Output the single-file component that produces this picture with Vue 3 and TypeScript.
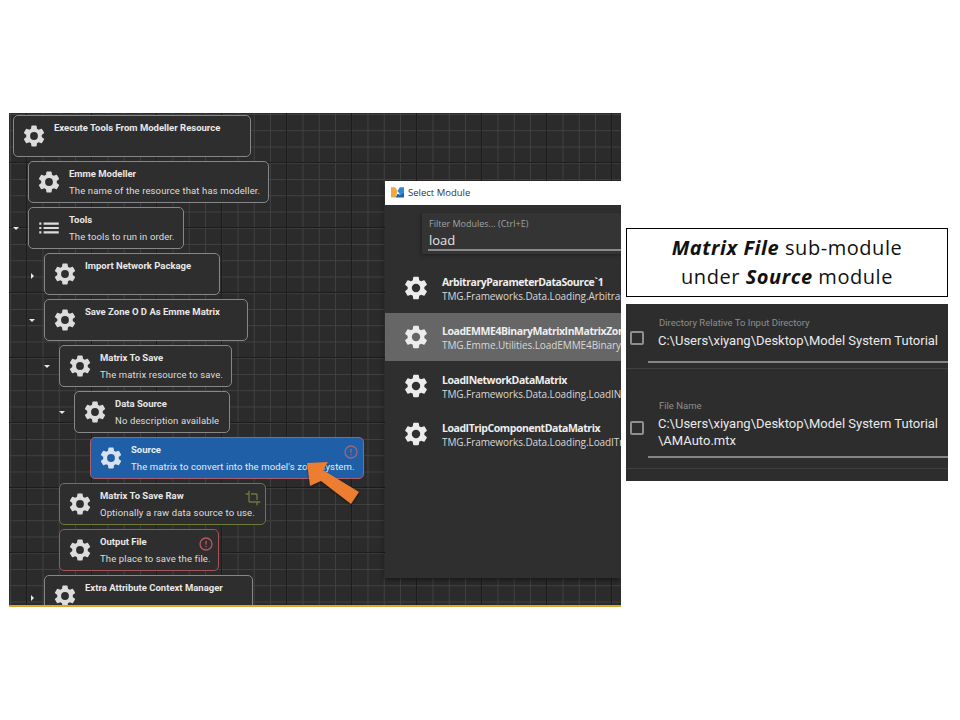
<script setup lang="ts">
interface TreeNode { title: string; desc?: string; left: number; width: number; kind?: string; icon?: string; caret?: string; mark?: string }
const nodes: TreeNode[] = [
  { title: 'Execute Tools From Modeller Resource', left: 4, width: 238 },
  { title: 'Emme Modeller', desc: 'The name of the resource that has modeller.', left: 19, width: 241 },
  { title: 'Tools', desc: 'The tools to run in order.', left: 19, width: 156, icon: 'list', caret: 'down' },
  { title: 'Import Network Package', left: 35, width: 176, caret: 'right' },
  { title: 'Save Zone O D As Emme Matrix', left: 35, width: 204, caret: 'down' },
  { title: 'Matrix To Save', desc: 'The matrix resource to save.', left: 50, width: 173, caret: 'down' },
  { title: 'Data Source', desc: 'No description available', left: 65, width: 156, caret: 'down' },
  { title: 'Source', desc: "The matrix to convert into the model's zone system.", left: 81, width: 274, kind: 'selected', mark: 'alert' },
  { title: 'Matrix To Save Raw', desc: 'Optionally a raw data source to use.', left: 50, width: 207, kind: 'optional', mark: 'crop' },
  { title: 'Output File', desc: 'The place to save the file.', left: 50, width: 160, kind: 'error', mark: 'alert' },
  { title: 'Extra Attribute Context Manager', left: 35, width: 209, caret: 'right' },
]
const modules = [
  { name: 'ArbitraryParameterDataSource`1', path: 'TMG.Frameworks.Data.Loading.ArbitraryParameter' },
  { name: 'LoadEMME4BinaryMatrixInMatrixZoneSystem', path: 'TMG.Emme.Utilities.LoadEMME4BinaryMatrix', active: true },
  { name: 'LoadINetworkDataMatrix', path: 'TMG.Frameworks.Data.Loading.LoadINetworkData' },
  { name: 'LoadITripComponentDataMatrix', path: 'TMG.Frameworks.Data.Loading.LoadITripComp' },
]
const gear = 'M19.14 12.94c.04-.3.06-.61.06-.94s-.02-.64-.07-.94l2.03-1.58a.49.49 0 0 0 .12-.61l-1.92-3.32a.49.49 0 0 0-.59-.22l-2.39.96a7 7 0 0 0-1.62-.94l-.36-2.54a.48.48 0 0 0-.48-.41h-3.84a.48.48 0 0 0-.47.41l-.36 2.54c-.59.24-1.13.57-1.62.94l-2.39-.96a.48.48 0 0 0-.59.22L2.74 8.87a.48.48 0 0 0 .12.61l2.03 1.58c-.05.3-.09.63-.09.94s.02.64.07.94l-2.03 1.58a.49.49 0 0 0-.12.61l1.92 3.32c.12.22.37.29.59.22l2.39-.96c.5.38 1.03.7 1.62.94l.36 2.54c.05.24.24.41.48.41h3.84c.24 0 .44-.17.47-.41l.36-2.54c.59-.24 1.13-.56 1.62-.94l2.39.96c.22.08.47 0 .59-.22l1.92-3.32a.48.48 0 0 0-.12-.61zM12 15.6a3.6 3.6 0 1 1 0-7.2 3.6 3.6 0 0 1 0 7.2z'
</script>

<template>
  <main class="page">
    <section class="canvas">
      <div class="tree">
        <div v-for="n in nodes" :key="n.title" class="row" :style="{ marginLeft: n.left + 'px', width: n.width + 'px' }">
          <span v-if="n.caret" class="caret" :class="n.caret"></span>
          <article class="node" :class="n.kind">
            <svg v-if="n.icon === 'list'" class="nicon" viewBox="0 0 24 24"><path d="M3 13h2v-2H3zm0 4h2v-2H3zm0-8h2V7H3zm4 4h14v-2H7zm0 4h14v-2H7zM7 7v2h14V7z" /></svg>
            <svg v-else class="nicon" viewBox="0 0 24 24"><path :d="gear" /></svg>
            <div class="ntext">
              <div class="ntitle">{{ n.title }}</div>
              <div v-if="n.desc" class="ndesc">{{ n.desc }}</div>
            </div>
            <svg v-if="n.mark === 'alert'" class="mark alert" viewBox="0 0 24 24"><path d="M11 15h2v2h-2zm0-8h2v6h-2zm1-5a10 10 0 1 0 0 20 10 10 0 0 0 0-20zm0 18a8 8 0 1 1 0-16 8 8 0 0 1 0 16z" /></svg>
            <svg v-if="n.mark === 'crop'" class="mark crop" viewBox="0 0 24 24"><path d="M17 15h2V7a2 2 0 0 0-2-2H9v2h8zM7 17V1H5v4H1v2h4v10a2 2 0 0 0 2 2h10v4h2v-4h4v-2z" /></svg>
          </article>
        </div>
      </div>

      <svg class="arrow" viewBox="0 0 56 46">
        <path d="M2 3 L23 2 L18 10 L54 32 L46 44 L16 21 L5 26 Z" />
      </svg>

      <section class="dialog">
        <header class="dtitle">
          <svg class="logo" viewBox="0 0 14 12">
            <path d="M0 1h4.5l2.5 4-2 7H0z" fill="#f2a93b" />
            <path d="M7 5l2.5-4H14v5l-4 3z" fill="#2d86d6" />
            <path d="M5 12l2-4 3 1 4-3v6z" fill="#1c62ad" />
          </svg>
          <span>Select Module</span>
        </header>
        <div class="filter">
          <div class="flabel">Filter Modules... (Ctrl+E)</div>
          <div class="fvalue">load</div>
        </div>
        <ul class="mlist">
          <li v-for="m in modules" :key="m.name" class="mitem" :class="{ active: m.active }">
            <svg class="micon" viewBox="0 0 24 24"><path :d="gear" /></svg>
            <div class="mtext">
              <div class="mname">{{ m.name }}</div>
              <div class="mpath">{{ m.path }}</div>
            </div>
          </li>
        </ul>
      </section>
    </section>

    <aside class="side">
      <div class="caption"><b>Matrix File</b> sub-module<br />under <b>Source</b> module</div>
      <div class="props">
        <div class="prop first">
          <span class="check"></span>
          <div class="field">
            <div class="plabel">Directory Relative To Input Directory</div>
            <div class="pvalue">C:\Users\xiyang\Desktop\Model System Tutorial</div>
          </div>
        </div>
        <div class="prop second">
          <span class="check"></span>
          <div class="field">
            <div class="plabel">File Name</div>
            <div class="pvalue">C:\Users\xiyang\Desktop\Model System Tutorial</div>
            <div class="pvalue next">\AMAuto.mtx</div>
          </div>
        </div>
      </div>
    </aside>
  </main>
</template>

<style>
html, body { margin: 0; background: #fff; }
</style>

<style scoped>
.page { width: 960px; height: 720px; display: flex; align-items: flex-start; padding: 113px 0 0 9px; box-sizing: border-box; background: #fff; overflow: hidden; font-family: Roboto, "Liberation Sans", sans-serif; }
.canvas {
  position: relative; width: 612px; height: 494px; flex: none; overflow: hidden; box-sizing: border-box;
  border-bottom: 2px solid #d8a727;
  background-color: #2b2b2b;
  background-image:
    linear-gradient(#1c1c1c 1px, transparent 1px),
    linear-gradient(90deg, #1c1c1c 1px, transparent 1px),
    linear-gradient(#414141 1px, transparent 1px),
    linear-gradient(90deg, #414141 1px, transparent 1px);
  background-size: 65px 65px, 65px 65px, 16.25px 16.25px, 16.25px 16.25px;
  background-position: 17px 49px, 17px 49px, 1px 1px, 1px 1px;
}
.tree { display: flex; flex-direction: column; gap: 4px; padding-top: 2px; }
.row { position: relative; height: 42px; flex: none; }
.node { height: 42px; box-sizing: border-box; display: flex; position: relative; padding: 5px 8px 0 7px; background: #2e2e2e; border: 1px solid #85878b; border-radius: 5px; color: #f0f0f0; }
.node.selected { background: #1f5fa8; border-color: #a8606e; }
.node.optional { border-color: #6d7a3c; }
.node.error { border-color: #a55458; }
.nicon { width: 26px; height: 26px; fill: #dcdcdc; flex: none; margin: 2px 7px 0 0; }
.ntext { min-width: 0; white-space: nowrap; }
.ntitle { font-size: 9.5px; line-height: 14px; font-weight: 700; color: #e8e8e8; }
.ndesc { font-size: 9.5px; line-height: 14px; margin-top: 3px; color: #dedede; letter-spacing: 0.12px; }
.selected .nicon { fill: #d8e2ee; }
.selected .ndesc, .selected .ntitle { color: #e6edf5; }
.mark { position: absolute; width: 16px; height: 16px; top: 6px; right: 4px; }
.alert { fill: #bb5560; }
.selected .alert { fill: #a0657e; }
.crop { fill: #6d7a3c; }
.caret { position: absolute; top: 20px; left: -15px; width: 0; height: 0; }
.caret.down { border-left: 3px solid transparent; border-right: 3px solid transparent; border-top: 3px solid #e8e8e8; }
.caret.right { left: -13px; border-top: 3px solid transparent; border-bottom: 3px solid transparent; border-left: 3px solid #e8e8e8; }
.arrow { position: absolute; left: 296px; top: 347px; width: 56px; height: 46px; fill: #ed7d31; filter: drop-shadow(0 1px 1px rgba(0,0,0,.5)); }
.dialog { position: absolute; left: 376px; top: 68px; width: 236px; height: 397px; background: #2f2f2f; box-shadow: -1px 2px 5px rgba(0,0,0,.45); font-family: "Open Sans", "Liberation Sans", sans-serif; overflow: hidden; }
.dtitle { height: 24px; background: #fff; display: flex; align-items: center; gap: 4px; padding: 0 0 2px 6px; box-sizing: border-box; font-size: 9.5px; color: #333; }
.logo { width: 13px; height: 12px; flex: none; }
.filter { margin: 8px 0 0 37px; width: 240px; height: 41px; box-sizing: border-box; padding: 5px 0 0 7px; position: relative; background: #343434; box-shadow: -1px 1px 4px rgba(0,0,0,.35); }
.filter::after { content: ''; position: absolute; left: 6px; right: 0; top: 36px; height: 2px; background: #8a8a8a; }
.flabel { font-size: 9px; line-height: 11px; color: #a2a2a2; }
.fvalue { font-size: 13px; line-height: 17px; color: #e4e4e4; margin-top: 3px; }
.mlist { list-style: none; margin: 10px 0 0; padding: 0; }
.mitem { height: 48.67px; display: flex; align-items: center; white-space: nowrap; padding-left: 17px; box-sizing: border-box; }
.mitem.active { background: #666; }
.micon { width: 28px; height: 28px; fill: #ececec; flex: none; margin-right: 12px; }
.mtext { margin-top: 2px; }
.mname { font-size: 10.5px; line-height: 14px; font-weight: 700; letter-spacing: -0.45px; color: #eee; }
.mpath { font-size: 10px; line-height: 14px; letter-spacing: -0.08px; color: #d8d8d8; }
.side { margin: 115px 0 0 5px; width: 322px; flex: none; display: flex; flex-direction: column; gap: 7px; }
.caption { height: 69px; box-sizing: border-box; border: 1px solid #000; background: #fff; font-family: "Open Sans", "Liberation Sans", sans-serif; font-size: 20px; line-height: 29px; letter-spacing: 0.55px; padding-top: 4px; text-align: center; color: #111; }
.caption b { font-style: italic; }
.props { height: 177px; background: #2d2d2d; overflow: hidden; }
.prop { display: flex; position: relative; box-sizing: border-box; }
.prop.first { height: 65px; border-bottom: 1px solid #3f3f3f; padding-top: 13px; }
.prop.second { height: 100px; padding-top: 31px; border-bottom: 1px solid #3f3f3f; }
.check { width: 14px; height: 14px; border: 2px solid #8e8e8e; border-radius: 2px; box-sizing: border-box; flex: none; margin: 14px 0 0 4px; }
.prop.second .check { margin-top: 21px; }
.field { position: relative; margin-left: 4px; padding-left: 10px; flex: 1; height: 46px; }
.prop.second .field { height: 58px; }
.field::after { content: ''; position: absolute; left: 0; right: 0; bottom: 0; height: 2px; background: #858585; }
.plabel { font-size: 9.5px; line-height: 12px; color: #8e8e8e; margin-left: 1px; }
.pvalue { font-size: 13px; line-height: 16px; color: #eaeaea; margin-top: 4px; white-space: nowrap; }
.pvalue.next { margin-top: 1px; }
</style>
